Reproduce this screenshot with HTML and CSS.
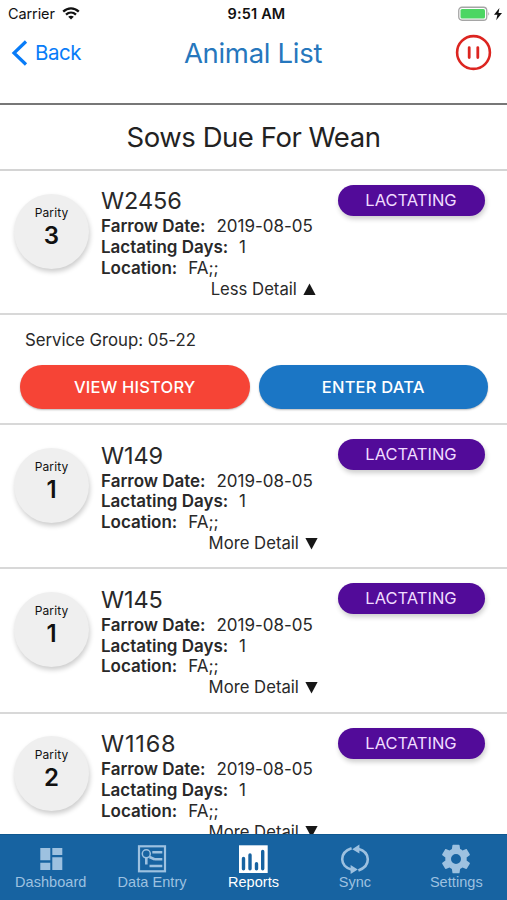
FILE: index.html
```html
<!DOCTYPE html>
<html lang="en">
<head>
<meta charset="utf-8">
<title>Animal List</title>
<link rel="stylesheet" href="styles.css">
</head>
<body>
<div class="app">
  <header class="top">
    <div class="status">
      <div class="carrier"><span>Carrier</span>
        <svg class="wifi" width="18" height="13" viewBox="0 0 18 13" fill="none" stroke="#111" stroke-width="2.3"><path d="M1.2 4.6C5.8.2 12.2.2 16.8 4.6M4 7.7c3-2.8 7-2.8 10 0"/><path d="M9 12.5 6.2 9.8c1.6-1.4 4-1.4 5.6 0z" fill="#111" stroke="none"/></svg>
      </div>
      <div class="time">9:51 AM</div>
      <div class="power">
        <svg width="46" height="16" viewBox="0 0 46 16"><rect x=".75" y="1.25" width="28" height="13" rx="3.3" fill="#fff" stroke="#a5a5a5" stroke-width="1.3"/><rect x="2.5" y="3" width="24.5" height="9.5" rx="1.6" fill="#4cd663"/><path d="M30.3 5.8q1.8 2 0 4z" fill="#a5a5a5"/><path d="M41.4 2 36 8.8h3.4l-1.2 5.4 5.8-7.3h-3.5z" fill="#111"/></svg>
      </div>
    </div>
    <div class="nav">
      <div class="back">
        <svg width="17" height="26" viewBox="0 0 17 26" fill="none" stroke="#087cf8" stroke-width="3.2"><path d="M15 1.5 3 13l12 11.5"/></svg>
        <span>Back</span>
      </div>
      <h1>Animal List</h1>
      <svg class="pause" width="37" height="37" viewBox="0 0 37 37" fill="none" stroke="#dc2520"><circle cx="18.5" cy="18.5" r="16.4" stroke-width="2.6"/><path d="M14.2 13.6v10M22.8 13.6v10" stroke-width="2.8" stroke-linecap="round"/></svg>
    </div>
  </header>
  <h2><span>Sows Due For Wean</span></h2>
  <main>
    <section class="animal">
      <div class="parity"><small>Parity</small><b>3</b></div>
      <div class="info">
        <h3>W2456</h3>
        <p><b>Farrow Date:</b><span>2019-08-05</span></p>
        <p><b>Lactating Days:</b><span>1</span></p>
        <p><b>Location:</b><span>FA;;</span></p>
      </div>
      <span class="pill">LACTATING</span>
      <div class="toggle"><span>Less Detail</span><svg width="13" height="13" viewBox="0 0 13 13"><path d="M.4 12 6.5.6l6.1 11.4z" fill="#171717"/></svg></div>
    </section>
    <section class="detail">
      <p>Service Group: 05-22</p>
      <div class="actions"><button class="red">VIEW HISTORY</button><button class="blue">ENTER DATA</button></div>
    </section>
    <section class="animal">
      <div class="parity"><small>Parity</small><b>1</b></div>
      <div class="info">
        <h3>W149</h3>
        <p><b>Farrow Date:</b><span>2019-08-05</span></p>
        <p><b>Lactating Days:</b><span>1</span></p>
        <p><b>Location:</b><span>FA;;</span></p>
      </div>
      <span class="pill">LACTATING</span>
      <div class="toggle"><span>More Detail</span><svg width="13" height="13" viewBox="0 0 13 13"><path d="M.4 1 6.5 12.4 12.6 1z" fill="#171717"/></svg></div>
    </section>
    <section class="animal">
      <div class="parity"><small>Parity</small><b>1</b></div>
      <div class="info">
        <h3>W145</h3>
        <p><b>Farrow Date:</b><span>2019-08-05</span></p>
        <p><b>Lactating Days:</b><span>1</span></p>
        <p><b>Location:</b><span>FA;;</span></p>
      </div>
      <span class="pill">LACTATING</span>
      <div class="toggle"><span>More Detail</span><svg width="13" height="13" viewBox="0 0 13 13"><path d="M.4 1 6.5 12.4 12.6 1z" fill="#171717"/></svg></div>
    </section>
    <section class="animal">
      <div class="parity"><small>Parity</small><b>2</b></div>
      <div class="info">
        <h3 class="wide">W1168</h3>
        <p><b>Farrow Date:</b><span>2019-08-05</span></p>
        <p><b>Lactating Days:</b><span>1</span></p>
        <p><b>Location:</b><span>FA;;</span></p>
      </div>
      <span class="pill">LACTATING</span>
      <div class="toggle"><span>More Detail</span><svg width="13" height="13" viewBox="0 0 13 13"><path d="M.4 1 6.5 12.4 12.6 1z" fill="#171717"/></svg></div>
    </section>
  </main>
  <nav class="tabs">
    <div class="tab"><svg width="30" height="30" viewBox="0 0 30 30" fill="currentColor"><path d="M4.3 4h10v12.3h-10zM16.3 4h10v7h-10zM16.3 13.3h10V26h-10zM4.3 18.7h10V26h-10z"/></svg><span>Dashboard</span></div>
    <div class="tab"><svg width="30" height="30" viewBox="0 0 30 30" fill="none" stroke="currentColor"><rect x="2" y="2.3" width="26" height="25" stroke-width="2.2"/><circle cx="9.3" cy="9.8" r="4" stroke-width="1.5"/><path d="M9.3 13.8v6.7" stroke-width="2.6"/><path d="M15.3 8.3h10M17.3 15.2h8M12.5 22h12.8M12.5 13l5 2.2" stroke-width="2.6"/></svg><span>Data Entry</span></div>
    <div class="tab active"><svg width="30" height="30" viewBox="0 0 30 30"><path fill="currentColor" d="M1 1.3h28.7V29H1z"/><path stroke="#1763a1" stroke-width="3.4" stroke-linecap="round" d="M5.5 14.5v10.3M12 11v13.8M18.5 19.8v5M24.7 7.5v17.3"/></svg><span>Reports</span></div>
    <div class="tab"><svg width="30" height="30" viewBox="0 0 30 30" fill="none" stroke="currentColor" stroke-width="2.6"><path d="M11.6 4.2C-1 8.3-1 22.5 12 25.8M18 4.8C31 8.2 31 22.3 18.4 26.4"/><path fill="currentColor" stroke="none" d="m12.2 5.2 7.2-4.7v9zM17.8 25.4 10.6 30v-9z"/></svg><span>Sync</span></div>
    <div class="tab"><svg width="30" height="30" viewBox="1.5 1.5 21 21" fill="currentColor"><path d="M19.43 12.98c.04-.32.07-.64.07-.98s-.03-.66-.07-.98l2.11-1.65c.19-.15.24-.42.12-.64l-2-3.46c-.12-.22-.39-.3-.61-.22l-2.49 1c-.52-.4-1.08-.73-1.69-.98l-.38-2.65C14.46 2.18 14.25 2 14 2h-4c-.25 0-.46.18-.49.42l-.38 2.65c-.61.25-1.17.59-1.69.98l-2.49-1c-.23-.09-.49 0-.61.22l-2 3.46c-.13.22-.07.49.12.64l2.11 1.65c-.04.32-.07.65-.07.98s.03.66.07.98l-2.11 1.65c-.19.15-.24.42-.12.64l2 3.46c.12.22.39.3.61.22l2.49-1c.52.4 1.08.73 1.69.98l.38 2.65c.03.24.24.42.49.42h4c.25 0 .46-.18.49-.42l.38-2.65c.61-.25 1.17-.59 1.69-.98l2.49 1c.23.09.49 0 .61-.22l2-3.46c.12-.22.07-.49-.12-.64zM12 15.5a3.5 3.5 0 1 1 0-7 3.5 3.5 0 0 1 0 7z"/></svg><span>Settings</span></div>
  </nav>
</div>
</body>
</html>
```
FILE: styles.css
```css
* { box-sizing: border-box; }
body { margin: 0; background: #fff; color: #292929; font-family: Inter, "Liberation Sans", sans-serif; }
h1, h2, h3, p { margin: 0; font-weight: 400; }
svg { display: block; flex: none; }
.app { width: 507px; height: 900px; display: flex; flex-direction: column; overflow: hidden; }
.top { height: 105px; flex: none; border-bottom: 2px solid #777; }
.status { height: 27px; display: grid; grid-template-columns: 1fr auto 1fr; align-items: center; padding: 0 4px 0 8px; color: #111; font-size: 14.5px; }
.carrier { display: flex; align-items: center; gap: 7px; letter-spacing: -.1px; }
.time { font-weight: 600; font-size: 14.5px; margin-left: 2px; letter-spacing: .15px; }
.power { justify-self: end; margin-right: -1px; }
.nav { height: 51px; display: grid; grid-template-columns: 1fr auto 1fr; align-items: center; padding: 0 15px 0 11px; }
.back { display: flex; align-items: center; gap: 7px; color: #087cf8; font-size: 20.5px; letter-spacing: -.5px; }
h1 { color: #2677bd; font-size: 27.5px; letter-spacing: -.3px; margin-left: 3px; }
.pause { justify-self: end; }
h2 { height: 66px; flex: none; border-bottom: 2px solid #d4d4d4; text-align: center; font-size: 27.5px; line-height: 65px; letter-spacing: -.45px; color: #222; }
main { flex: 1; min-height: 0; overflow: hidden; }
.animal { height: 144.2px; display: grid; grid-template-columns: 87px 1fr 147px; grid-template-rows: 107px 22px; padding: 0 22.5px 0 14px; border-bottom: 2px solid #d8d8d8; }
.parity { width: 75px; height: 75px; margin-top: 22.5px; border-radius: 50%; background: #efefef; box-shadow: 1px 3px 5px #0003; display: flex; flex-direction: column; align-items: center; color: #111; }
.parity small { margin-top: 11px; font-size: 12px; line-height: 15px; letter-spacing: .1px; }
.parity b { font-size: 24px; line-height: 31px; font-weight: 600; }
.info { padding-top: 15.3px; }
h3 { font-size: 23.5px; line-height: 30px; letter-spacing: -.1px; }
.wide { letter-spacing: .8px; }
.info p { font-size: 17px; line-height: 20.8px; white-space: nowrap; display: flex; gap: 11px; letter-spacing: -.02px; }
.info b { font-weight: 600; }
.pill { height: 31px; margin-top: 14px; border-radius: 16px; background: #520b99; color: #f0dcff; box-shadow: 1px 3px 5px #0003; font-size: 16.5px; line-height: 31px; text-align: center; }
.toggle { grid-column: 1 / -1; display: flex; justify-content: center; align-items: center; gap: 6px; font-size: 16.7px; line-height: 22px; padding-left: 28px; }
.detail { height: 110.1px; border-bottom: 2px solid #d8d8d8; padding: 15px 19px 0 20px; }
.detail p { font-size: 16.8px; line-height: 20px; padding-left: 5px; letter-spacing: -.03px; }
.actions { display: grid; grid-template-columns: 1fr 1fr; gap: 9px; margin-top: 15px; }
button { height: 44px; border: 0; border-radius: 22px; color: #fff; font: 500 16.5px Inter, sans-serif; letter-spacing: .2px; padding: 0; box-shadow: 0 1px 2px #0004; }
.red { background: #f64436; }
.blue { background: #1b76c5; }
.tabs { height: 66px; flex: none; background: #1763a1; display: grid; grid-template-columns: repeat(5, 1fr); border-top: 1px solid #105890; color: #9dc1e0; }
.tab { display: flex; flex-direction: column; align-items: center; font: 14.5px "Liberation Sans", sans-serif; letter-spacing: .05px; padding-top: 9px; }
.tab span { line-height: 17px; }
.active { color: #fff; }
```
